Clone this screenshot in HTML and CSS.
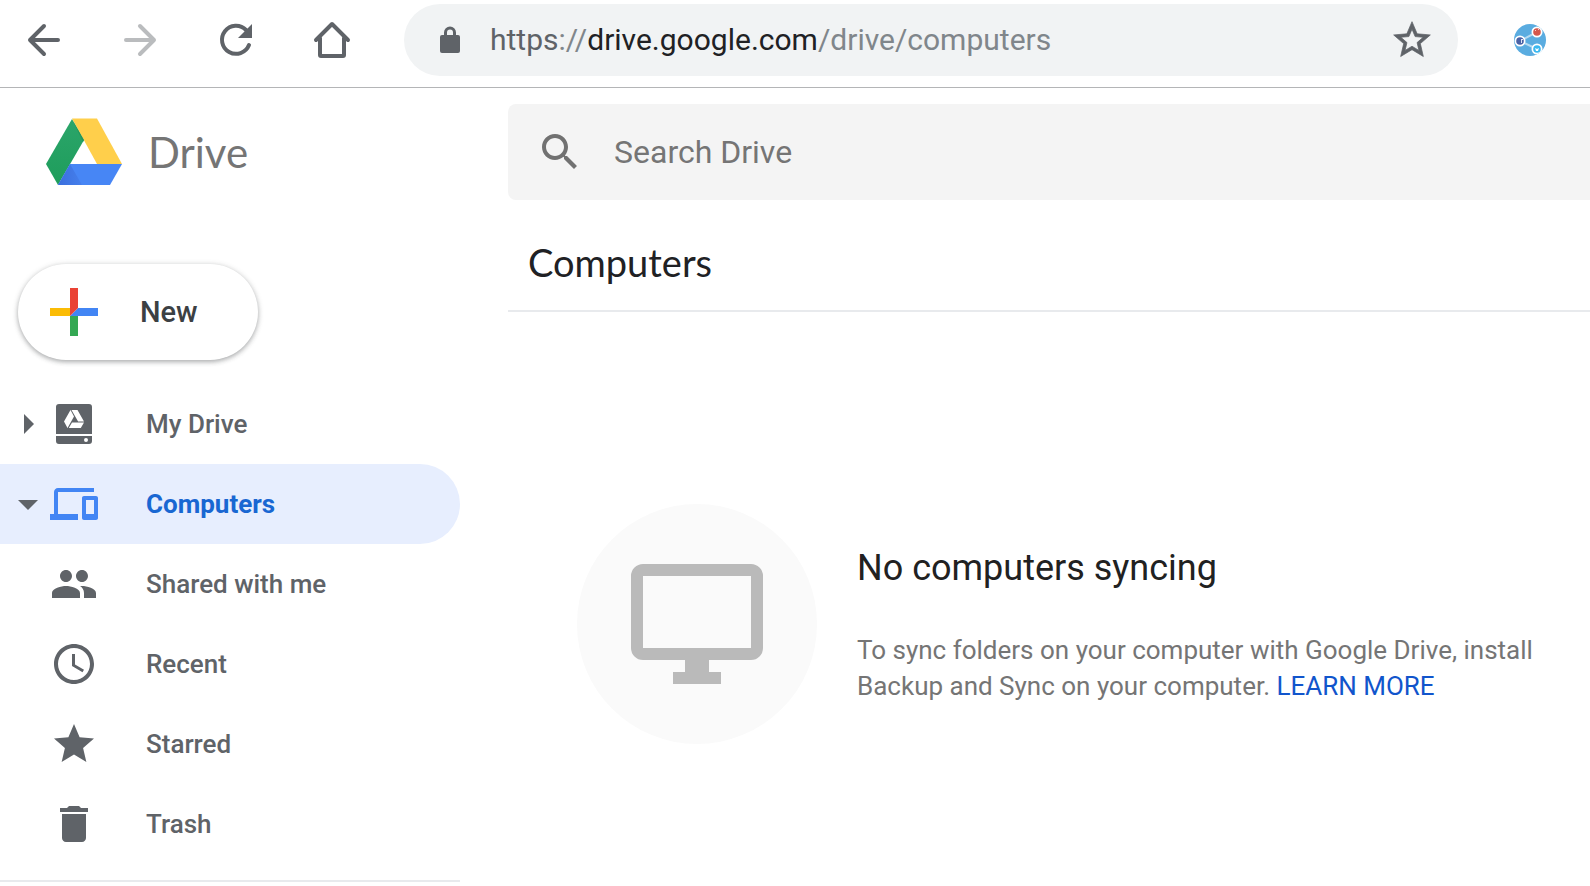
FILE: index.html
```html
<!DOCTYPE html>
<html lang="en">
<head>
<meta charset="utf-8">
<title>Computers - Google Drive</title>
<link rel="stylesheet" href="styles.css">
</head>
<body>
<header class="toolbar">
  <div class="toolbar-nav">
    <button class="tool" aria-label="Back"><svg viewBox="0 0 40 40"><path class="line" d="M34 20H6M20 6L6 20l14 14"/></svg></button>
    <button class="tool tool-off" aria-label="Forward" disabled><svg viewBox="0 0 40 40"><path class="line" d="M6 20h28M20 6l14 14-14 14"/></svg></button>
    <button class="tool" aria-label="Reload"><svg viewBox="0 0 40 40"><path class="line" d="M33 25A14 14 0 1 1 30 10"/><path d="M36 4v14H22z"/></svg></button>
    <button class="tool" aria-label="Home"><svg viewBox="0 0 40 40"><path class="line" d="M4 20L20 4l16 16M8 18v17q0 1 1 1h22q1 0 1-1V18"/></svg></button>
  </div>
  <div class="omnibox">
    <svg class="lock" viewBox="0 0 20 28"><rect y="9" width="20" height="18" rx="2"/><path d="M5.500 10V6.500a4.500 4.500 0 0 1 9 0V10" fill="none" stroke="currentColor" stroke-width="3"/></svg>
    <div class="url" role="textbox" contenteditable="true" spellcheck="false" aria-label="Address"><span class="scheme">https</span>://<span class="host">drive.google.com</span>/drive/computers</div>
    <button class="bookmark" aria-label="Bookmark this page"><svg viewBox="0 0 24 24"><path stroke="currentColor" stroke-width=".4" d="M22 9.240l-7.190-.620L12 2 9.190 8.630 2 9.240l5.460 4.730L5.820 21 12 17.270 18.180 21l-1.630-7.030L22 9.240zM12 15.400l-3.760 2.270 1-4.280-3.320-2.880 4.380-.380L12 6.100l1.710 4.040 4.380.380-3.320 2.880 1 4.280L12 15.400z"/></svg></button>
  </div>
  <button class="extension" aria-label="Share extension">
    <svg viewBox="0 0 32 32">
      <defs><clipPath id="disc"><circle cx="16" cy="16" r="16"/></clipPath></defs>
      <g clip-path="url(#disc)">
        <rect width="32" height="32" fill="#5aace0"/>
        <path d="M23 8L6 17l17 8" fill="none" stroke="#b5daf2" stroke-width="2"/>
        <circle cx="6" cy="17" r="5.500" fill="#fff"/><circle cx="23" cy="8" r="5.500" fill="#fff"/><circle cx="23" cy="25" r="5.500" fill="#fff"/>
        <circle cx="6" cy="17" r="3.800" fill="#4a62a6"/><path d="M7 15h2v1H8v3H7z" fill="#dfe4f2"/>
        <circle cx="23" cy="8" r="3.800" fill="#d4574c"/><path d="M21 6h1v1h-1zM24 5h1v1h-1z" fill="#f3cfcb"/>
        <circle cx="23" cy="25" r="3.800" fill="#3cb8ef"/><path d="M21 24l2 1 2-1-1 3h-2z" fill="#fff"/>
      </g>
    </svg>
  </button>
</header>
<div class="app">
  <aside class="sidebar">
    <a class="brand" href="#">
      <svg viewBox="0 0 76 68">
        <defs>
          <linearGradient id="leaf" x1="0" y1="0" x2="0" y2="1"><stop offset="0" stop-color="#2ba56a"/><stop offset="1" stop-color="#1e9d5b"/></linearGradient>
          <linearGradient id="shade" x1="0" y1="0" x2="1" y2="0"><stop offset="0" stop-color="#3b6fdd"/><stop offset="1" stop-color="#457fec"/></linearGradient>
        </defs>
        <path d="M26 1l12 21-26 45L0 46z" fill="url(#leaf)"/>
        <path d="M26 .5h25L76 46H51z" fill="#ffcf4b"/>
        <path d="M24 46h52L64 67H12z" fill="#4786f5"/>
        <path d="M24 46l12 21H12z" fill="url(#shade)"/>
        <path d="M26 1l12 21-1 2z" fill="#23965b"/>
      </svg>
      <span>Drive</span>
    </a>
    <button class="new">
      <svg viewBox="0 0 48 48"><path fill="#fbbc05" d="M0 20h20v8H0z"/><path fill="#34a853" d="M20 28h8v20h-8z"/><path fill="#4285f4" d="M28 20h20v8H20z"/><path fill="#ea4335" d="M20 0h8v20l-8 8z"/></svg>
      <span>New</span>
    </button>
    <nav class="places">
      <a class="place" href="#"><svg class="caret" viewBox="0 0 20 20"><path d="M6 0l10 10L6 20z"/></svg><svg class="icon" viewBox="0 0 48 48"><path fill-rule="evenodd" d="M9 4h30a3 3 0 0 1 3 3v27H6V7a3 3 0 0 1 3-3zM20.500 10L14 21.500l3.500 6.500L24 16.500zM21.500 10l6.600 11.500H34L27.500 10zM22 22.500L18.800 28h12l3.200-5.500zM6 36h36v5a3 3 0 0 1-3 3H9a3 3 0 0 1-3-3zM36 38a2 2 0 1 0 0 4 2 2 0 0 0 0-4z"/></svg><span>My Drive</span></a>
      <a class="place place-current" href="#" aria-current="page"><svg class="caret" viewBox="0 0 20 20"><path d="M0 6h20L10 16z"/></svg><svg class="icon" viewBox="0 0 24 24"><path d="M4 6h18V4H4c-1.100 0-2 .9-2 2v11H0v3h14v-3H4V6zm19 2h-6c-.55 0-1 .45-1 1v10c0 .55.45 1 1 1h6c.55 0 1-.45 1-1V9c0-.55-.45-1-1-1zm-1 9h-4v-7h4v7z"/></svg><span>Computers</span></a>
      <a class="place" href="#"><span class="caret"></span><svg class="icon" viewBox="0 0 24 24"><path d="M16 11c1.660 0 2.990-1.340 2.990-3S17.660 5 16 5s-3 1.340-3 3 1.340 3 3 3zm-8 0c1.660 0 2.990-1.340 2.990-3S9.660 5 8 5 5 6.340 5 8s1.340 3 3 3zm0 2c-2.330 0-7 1.170-7 3.500V19h14v-2.500c0-2.330-4.670-3.500-7-3.500zm8 0c-.29 0-.62.020-.97.050 1.160.84 1.970 1.970 1.970 3.450V19h6v-2.500c0-2.330-4.670-3.500-7-3.500z"/></svg><span>Shared with me</span></a>
      <a class="place" href="#"><span class="caret"></span><svg class="icon" viewBox="0 0 24 24"><path d="M12 2C6.480 2 2 6.480 2 12s4.480 10 10 10 10-4.480 10-10S17.520 2 12 2zm0 18c-4.420 0-8-3.580-8-8s3.580-8 8-8 8 3.580 8 8-3.580 8-8 8zm.5-13H11v6l5.250 3.150.75-1.230-4.500-2.670z"/></svg><span>Recent</span></a>
      <a class="place" href="#"><span class="caret"></span><svg class="icon" viewBox="0 0 24 24"><path d="M12 17.270L18.180 21l-1.640-7.030L22 9.240l-7.190-.61L12 2 9.190 8.630 2 9.240l5.460 4.730L5.820 21z"/></svg><span>Starred</span></a>
      <a class="place" href="#"><span class="caret"></span><svg class="icon" viewBox="0 0 24 24"><path d="M6 19c0 1.100.9 2 2 2h8c1.100 0 2-.9 2-2V7H6v12zM19 4h-3.500l-1-1h-5l-1 1H5v2h14V4z"/></svg><span>Trash</span></a>
    </nav>
  </aside>
  <main class="content">
    <label class="search">
      <svg viewBox="0 0 24 24" aria-hidden="true"><path d="M15.500 14h-.79l-.28-.27C15.410 12.590 16 11.110 16 9.500 16 5.910 13.090 3 9.500 3S3 5.910 3 9.500 5.910 16 9.500 16c1.610 0 3.090-.59 4.230-1.570l.27.28v.79l5 4.990L20.490 19l-4.990-5zm-6 0C7.010 14 5 11.990 5 9.500S7.010 5 9.500 5 14 7.010 14 9.500 11.990 14 9.500 14z"/></svg>
      <input type="search" placeholder="Search Drive" aria-label="Search Drive">
    </label>
    <h1 class="title">Computers</h1>
    <section class="empty">
      <div class="empty-art"><svg viewBox="0 0 132 120"><path fill-rule="evenodd" d="M12 0h108a12 12 0 0 1 12 12v72a12 12 0 0 1-12 12H78v12h12v12H42v-12h12V96H12A12 12 0 0 1 0 84V12A12 12 0 0 1 12 0zm0 12v72h108V12z"/></svg></div>
      <div class="empty-text">
        <h2>No computers syncing</h2>
        <p>To sync folders on your computer with Google Drive, install Backup and Sync on your computer. <a href="#">LEARN MORE</a></p>
      </div>
    </section>
  </main>
</div>
</body>
</html>
```
FILE: styles.css
```css
* { box-sizing: border-box; }

body {
  margin: 0;
  overflow-x: hidden;
  background: #fff;
  color: #5f6368;
  font-family: Roboto, "Liberation Sans", sans-serif;
}

svg { display: block; flex: none; fill: currentColor; }
a { color: inherit; text-decoration: none; }
button { padding: 0; border: 0; background: none; color: inherit; font: inherit; }

/* Browser toolbar */
.toolbar {
  display: flex;
  align-items: center;
  height: 88px;
  padding: 0 44px 8px 24px;
  border-bottom: 1px solid #b4b5b7;
}
.toolbar-nav { display: flex; gap: 56px; }
.tool svg { width: 40px; height: 40px; }
.tool-off { color: #babcbe; }
.line {
  fill: none;
  stroke: currentColor;
  stroke-width: 4;
  stroke-linecap: round;
  stroke-linejoin: round;
}
.omnibox {
  display: flex;
  flex: 1;
  align-items: center;
  height: 72px;
  margin: 0 56px 0 52px;
  padding: 0 24px 0 36px;
  border-radius: 36px;
  background: #f1f3f4;
}
.lock { width: 20px; height: 28px; }
.url {
  flex: 1;
  margin-left: 30px;
  color: #80868b;
  font-size: 30px;
  line-height: 40px;
  white-space: nowrap;
  outline: 0;
}
.scheme { color: #5f6368; }
.host { color: #202124; }
.bookmark svg { width: 44px; height: 44px; }
.extension svg { width: 32px; height: 32px; }

/* Sidebar */
.app { display: flex; }
.sidebar { flex: none; width: 460px; }
.brand {
  display: flex;
  align-items: center;
  gap: 26px;
  margin: 30px 0 0 46px;
  height: 68px;
  color: #757575;
  font-family: Lato, sans-serif;
  font-size: 42px;
}
.brand svg { width: 76px; height: 68px; }
.new {
  display: flex;
  align-items: center;
  gap: 42px;
  width: 240px;
  height: 96px;
  margin: 78px 0 24px 18px;
  padding-left: 32px;
  border-radius: 48px;
  background: #fff;
  box-shadow: 0 2px 4px rgba(60, 64, 67, .3), 0 1px 6px rgba(60, 64, 67, .2);
  color: #3c4043;
  font-size: 29px;
  font-weight: 500;
}
.new svg { width: 48px; height: 48px; }
.places {
  padding-bottom: 16px;
  border-bottom: 2px solid #e8eaed;
}
.place {
  display: flex;
  align-items: center;
  height: 80px;
  padding-left: 18px;
  border-radius: 0 40px 40px 0;
  font-size: 26px;
  font-weight: 500;
}
.caret { width: 20px; height: 20px; margin-right: 12px; }
.icon { width: 48px; height: 48px; margin-right: 48px; }
.place-current { background: #e7eefe; color: #1967d2; font-weight: 700; }
.place-current .caret { color: #5f6368; }
.place-current .icon { color: #4285f4; }

/* Content */
.content { flex: 1; min-width: 0; margin-left: 48px; padding-top: 16px; }
.search {
  display: flex;
  align-items: center;
  height: 96px;
  padding-left: 28px;
  border-radius: 8px 0 0 8px;
  background: #f4f4f4;
  color: #717171;
}
.search svg { width: 48px; height: 48px; }
.search input {
  flex: 1;
  margin-left: 30px;
  padding: 0;
  border: 0;
  background: none;
  color: #717171;
  font: 32px Roboto, sans-serif;
  outline: 0;
}
.search input::placeholder { color: #757575; opacity: 1; }
.title {
  margin: 0;
  padding: 38px 20px 24px;
  border-bottom: 2px solid #e8eaed;
  color: #202124;
  font: 400 38px/48px Lato, sans-serif;
}
.empty {
  display: flex;
  gap: 40px;
  padding: 192px 32px 0 69px;
}
.empty-art {
  display: grid;
  flex: none;
  place-items: center;
  width: 240px;
  height: 240px;
  border-radius: 50%;
  background: #fafafa;
  color: #bababa;
}
.empty-art svg { width: 132px; height: 120px; }
.empty-text { max-width: 720px; padding-top: 40px; }
.empty-text h2 {
  margin: 0 0 40px;
  color: #212121;
  font-size: 36px;
  font-weight: 400;
  line-height: 48px;
}
.empty-text p { margin: 0; color: #757575; font-size: 26px; line-height: 36px; }
.empty-text a { color: #1155cc; }
```
